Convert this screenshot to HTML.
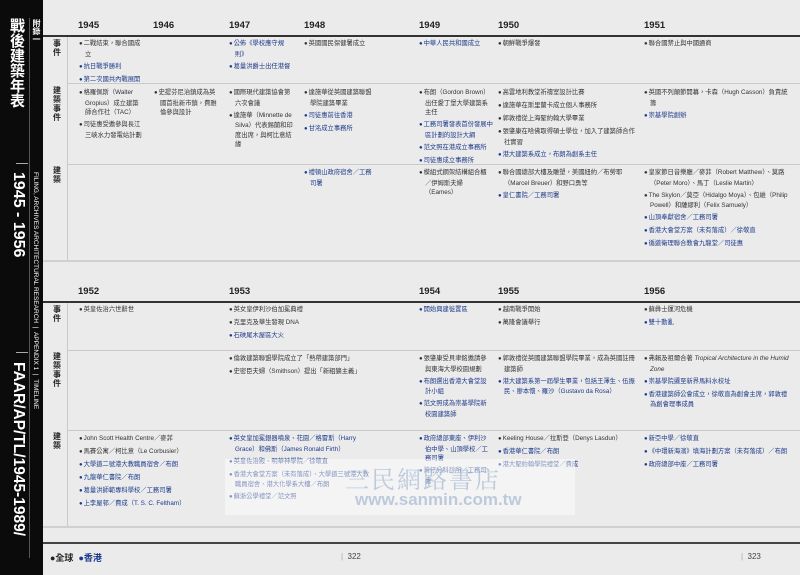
<!DOCTYPE html>
<html><head><meta charset="utf-8"><style>
*{margin:0;padding:0;box-sizing:border-box}
body{width:800px;height:575px;overflow:hidden;background:#ebebeb;font-family:"Liberation Sans","Noto Sans CJK TC",sans-serif;color:#222;position:relative}
.a{position:absolute}
.side{left:0;top:0;width:43px;height:575px;background:#0b0b0b}
.yr{position:absolute;font-size:9.5px;font-weight:bold;color:#222}
.c{position:absolute;font-size:6.3px;line-height:9.5px;color:#333}
.c p{padding-left:6px;text-indent:-6px;margin-bottom:2.5px}
.c p:before{content:"●";font-size:6px;margin-right:1px}
.b{color:#1d3a8a}
.lab{position:absolute;left:51px;width:12px;font-size:8px;line-height:9px;font-weight:bold;color:#222;text-align:center}
.hl{position:absolute;height:1px;background:#c9c9c9;left:67px;right:0}
.tk{position:absolute;height:2px;background:#333;left:43px;right:0}
.vl{position:absolute;width:1px;background:#c9c9c9;left:67px}
.vt{writing-mode:vertical-rl;position:absolute;color:#fff;white-space:nowrap}
</style></head><body>
<div class="a side"></div>
<div class="vt" style="left:8px;top:18px;font-size:15px;line-height:16px;font-weight:bold">戰後建築年表</div>
<div class="a" style="left:16px;top:163px;width:12px;height:1px;background:#aaa"></div>
<div class="vt" style="left:9px;top:172px;font-size:16px;font-weight:bold">1945 - 1956</div>
<div class="a" style="left:16px;top:352px;width:12px;height:1px;background:#aaa"></div>
<div class="vt" style="left:9px;top:362px;font-size:15.5px;font-weight:bold">FAAR/AP/TL/1945-1989/</div>
<div class="a" style="left:29px;top:18px;width:1px;height:540px;background:#555"></div>
<div class="vt" style="left:31px;top:19px;font-size:8px;font-weight:bold">附錄一</div>
<div class="vt" style="left:32px;top:172px;font-size:6.5px">FILING, ARCHIVES ARCHITECTURAL RESEARCH &nbsp;| &nbsp;APPENDIX 1 &nbsp;| &nbsp;TIMELINE</div>

<!-- block 1 -->
<div class="yr" style="left:78px;top:20px">1945</div>
<div class="yr" style="left:153px;top:20px">1946</div>
<div class="yr" style="left:229px;top:20px">1947</div>
<div class="yr" style="left:304px;top:20px">1948</div>
<div class="yr" style="left:419px;top:20px">1949</div>
<div class="yr" style="left:498px;top:20px">1950</div>
<div class="yr" style="left:644px;top:20px">1951</div>
<div class="tk" style="top:35px"></div>
<div class="vl" style="top:37px;height:224px"></div>
<div class="hl" style="top:83px"></div>
<div class="hl" style="top:164px"></div>
<div class="hl" style="top:260px;left:43px;height:2px;background:#d0d0d0"></div>
<div class="lab" style="top:39px">事件</div>
<div class="lab" style="top:86px">建築事件</div>
<div class="lab" style="top:166px">建築</div>

<div class="c" style="left:79px;top:39px;width:64px"><p>二戰結束，聯合國成立</p><p class="b">抗日戰爭勝利</p><p class="b">第二次國共內戰展開</p></div>
<div class="c" style="left:229px;top:39px;width:64px"><p class="b">公佈《學校應守規則》</p><p class="b">葛量洪爵士出任港督</p></div>
<div class="c" style="left:304px;top:39px;width:90px"><p>英國國民保健署成立</p></div>
<div class="c" style="left:419px;top:39px;width:75px"><p class="b">中華人民共和國成立</p></div>
<div class="c" style="left:498px;top:39px;width:140px"><p>朝鮮戰爭爆發</p></div>
<div class="c" style="left:644px;top:39px;width:145px"><p>聯合國禁止與中國通商</p></div>

<div class="c" style="left:79px;top:88px;width:64px"><p>格羅佩斯（Walter Gropius）成立建築師合作社（TAC）</p><p>司徒惠受邀參與長江三峽水力發電站計劃</p></div>
<div class="c" style="left:154px;top:88px;width:64px"><p>史提芬尼治鎮成為英國首批新市鎮，費雅倫參與設計</p></div>
<div class="c" style="left:229px;top:88px;width:64px"><p>國際現代建築協會第六次會議</p><p>達施華（Minnette de Silva）代表錫蘭和印度出席，與柯比意結緣</p></div>
<div class="c" style="left:304px;top:88px;width:68px"><p>達施華從英國建築聯盟學院建築畢業</p><p class="b">司徒惠前往香港</p><p class="b">甘洺成立事務所</p></div>
<div class="c" style="left:419px;top:88px;width:74px"><p>布朗（Gordon Brown）出任愛丁堡大學建築系主任</p><p class="b">工務司署發表首份發展中區計劃的設計大綱</p><p class="b">范文照在港成立事務所</p><p class="b">司徒惠成立事務所</p></div>
<div class="c" style="left:498px;top:88px;width:140px"><p>高雲地利教堂祈禱室設計比賽</p><p>達施華在斯里蘭卡成立個人事務所</p><p>郭敦禮從上海聖約翰大學畢業</p><p>張肇康在哈佛取得碩士學位，加入了建築師合作社實習</p><p class="b">港大建築系成立，布朗為創系主任</p></div>
<div class="c" style="left:644px;top:88px;width:145px"><p>英國不列顛節開幕，卡森（Hugh Casson）負責統籌</p><p class="b">崇基學院創辦</p></div>

<div class="c" style="left:304px;top:168px;width:68px"><p class="b">禮頓山政府宿舍／工務司署</p></div>
<div class="c" style="left:419px;top:168px;width:70px"><p>模組式鋼架結構組合櫃／伊姆斯夫婦（Eames）</p></div>
<div class="c" style="left:498px;top:168px;width:140px"><p>聯合國總部大樓及雕塑，美國紐約／布勞耶（Marcel Breuer）和野口勇等</p><p class="b">皇仁書院／工務司署</p></div>
<div class="c" style="left:644px;top:168px;width:148px"><p>皇家節日音樂廳／麥菲（Robert Matthew）、莫路（Peter Moro）、馬丁（Leslie Martin）</p><p>The Skylon／莫亞（Hidalgo Moya）、包維（Philip Powell）和薩繆利（Felix Samuely）</p><p class="b">山頂奉獻宿舍／工務司署</p><p class="b">香港大會堂方案（未有落成）／徐敬直</p><p class="b">循道衛理聯合教會九龍堂／司徒惠</p></div>

<!-- block 2 -->
<div class="yr" style="left:78px;top:286px">1952</div>
<div class="yr" style="left:229px;top:286px">1953</div>
<div class="yr" style="left:419px;top:286px">1954</div>
<div class="yr" style="left:498px;top:286px">1955</div>
<div class="yr" style="left:644px;top:286px">1956</div>
<div class="tk" style="top:301px"></div>
<div class="vl" style="top:303px;height:224px"></div>
<div class="hl" style="top:350px"></div>
<div class="hl" style="top:430px"></div>
<div class="hl" style="top:526px;left:43px;height:2px;background:#d0d0d0"></div>
<div class="lab" style="top:305px">事件</div>
<div class="lab" style="top:352px">建築事件</div>
<div class="lab" style="top:432px">建築</div>

<div class="c" style="left:79px;top:305px;width:140px"><p>英皇佐治六世辭世</p></div>
<div class="c" style="left:229px;top:305px;width:180px"><p>英女皇伊利沙伯加冕典禮</p><p>克里克及華生發現 DNA</p><p class="b">石硤尾木屋區大火</p></div>
<div class="c" style="left:419px;top:305px;width:75px"><p class="b">開始興建徙置區</p></div>
<div class="c" style="left:498px;top:305px;width:140px"><p>越南戰爭開始</p><p>萬隆會議舉行</p></div>
<div class="c" style="left:644px;top:305px;width:145px"><p>蘇彝士運河危機</p><p class="b">雙十動亂</p></div>

<div class="c" style="left:229px;top:354px;width:185px"><p>倫敦建築聯盟學院成立了「熱帶建築部門」</p><p>史密臣夫婦（Smithson）提出「新粗獷主義」</p></div>
<div class="c" style="left:419px;top:354px;width:72px"><p>張肇康受貝聿銘邀請參與東海大學校園規劃</p><p class="b">布朗選出香港大會堂設計小組</p><p class="b">范文照成為崇基學院新校園建築師</p></div>
<div class="c" style="left:498px;top:354px;width:140px"><p>郭敦禮從英國建築聯盟學院畢業，成為英國註冊建築師</p><p class="b">港大建築系第一屆學生畢業，包括王澤生、伍振民、廖本懷、羅沙（Gustavo da Rosa）</p></div>
<div class="c" style="left:644px;top:354px;width:145px"><p>弗賴及祖爾合著 <i>Tropical Architecture in the Humid Zone</i></p><p class="b">崇基學院遷至新界馬料水校址</p><p class="b">香港建築師公會成立，徐敬直為創會主席，郭敦禮為創會理事成員</p></div>

<div class="c" style="left:79px;top:434px;width:140px"><p>John Scott Health Centre／麥菲</p><p>馬賽公寓／柯比意（Le Corbusier）</p><p class="b">大學道二號港大教職員宿舍／布朗</p><p class="b">九龍華仁書院／布朗</p><p class="b">葛量洪師範專科學校／工務司署</p><p class="b">上李屋邨／費成（T. S. C. Feltham）</p></div>
<div class="c" style="left:229px;top:434px;width:140px"><p class="b">英女皇加冕銀器噴泉、花園／格雷斯（Harry Grace）和佛斯（James Ronald Firth）</p><p class="b">英皇佐治殿、明華神學院／徐敬直</p><p class="b">香港大會堂方案（未有落成）、大學道三號港大教職員宿舍、港大化學系大樓／布朗</p><p class="b">蘇浙公學禮堂／范文照</p></div>
<div class="c" style="left:419px;top:434px;width:72px"><p class="b">政府總部東座、伊利沙伯中學、山頂學校／工務司署</p><p class="b">灣仔分科診所／工務司署</p></div>
<div class="c" style="left:498px;top:434px;width:140px"><p>Keeling House／拉斯登（Denys Lasdun）</p><p class="b">香港華仁書院／布朗</p><p class="b">港大聖約翰學院禮堂／費成</p></div>
<div class="c" style="left:644px;top:434px;width:145px"><p class="b">新亞中學／徐敬直</p><p class="b">《中環新海濱》填海計劃方案（未有落成）／布朗</p><p class="b">政府總部中座／工務司署</p></div>

<!-- watermark -->
<div class="a" style="left:225px;top:459px;width:350px;height:56px;background:rgba(255,255,255,0.45)"></div>
<div class="a" style="left:345px;top:460px;font-size:24px;color:rgba(120,150,190,0.45);font-family:'Noto Serif CJK SC',serif;letter-spacing:2px">三民網路書店</div>
<div class="a" style="left:355px;top:490px;font-size:17px;font-weight:bold;color:rgba(120,150,190,0.45)">www.sanmin.com.tw</div>

<!-- footer -->
<div class="a" style="left:43px;top:542px;right:0;height:2px;background:#444"></div>
<div class="a" style="left:50px;top:551px;font-size:9px;font-weight:bold">●全球 &nbsp;<span style="color:#1d3a8a">●香港</span></div>
<div class="a" style="left:341px;top:552px;font-size:8px;color:#444"><span style="color:#aaa">|</span> &nbsp;322</div>
<div class="a" style="left:741px;top:552px;font-size:8px;color:#444"><span style="color:#aaa">|</span> &nbsp;323</div>
</body></html>
